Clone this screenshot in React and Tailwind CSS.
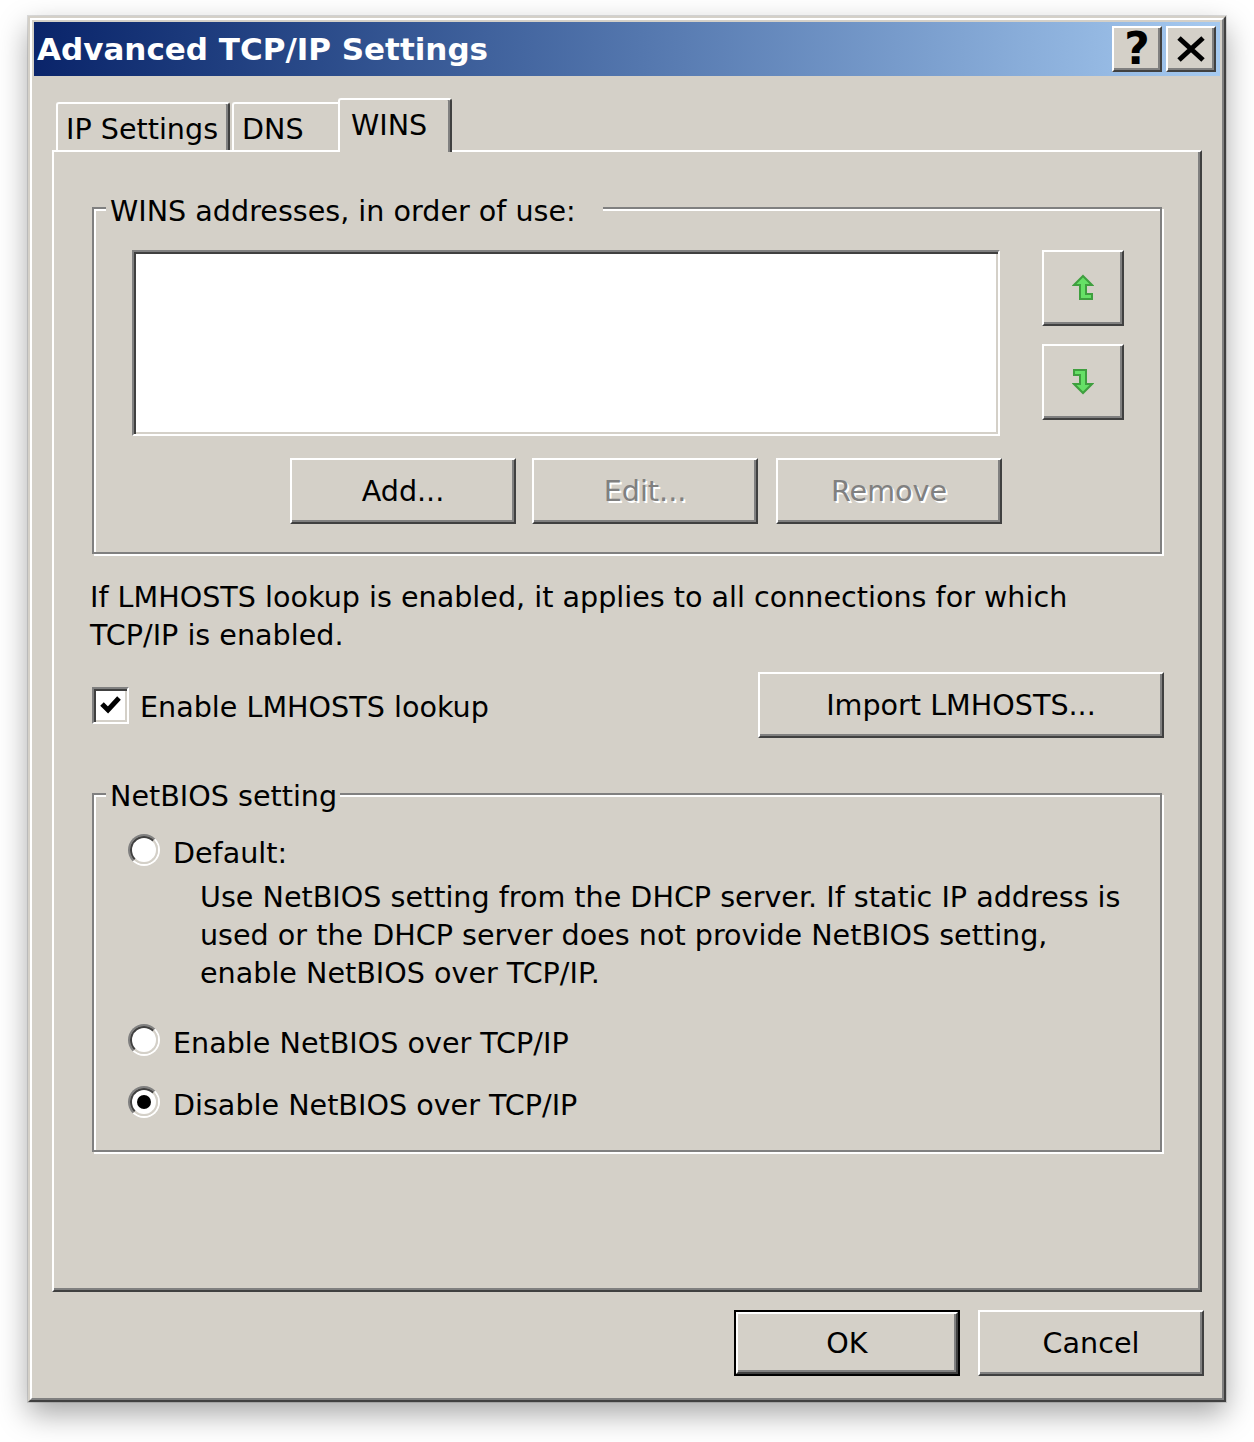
import React from 'react';

const font = "font-['DejaVu_Sans',Verdana,sans-serif]";
const raised = 'border-2 border-t-white border-l-white border-r-[#404040] border-b-[#404040] shadow-[inset_-2px_-2px_0_#808080] bg-[#d4d0c8]';
const etched = 'relative border-2 border-[#808080] shadow-[inset_2px_2px_0_#fff,2px_2px_0_#fff]';

function Button({ children, disabled, className = '' }) {
  return (
    <div className={`${raised} flex items-center justify-center ${className}`}>
      <span className={disabled ? 'text-[#808080] [text-shadow:2px_2px_0_#fff]' : 'text-black'}>{children}</span>
    </div>
  );
}

function Radio({ checked }) {
  return (
    <span className="w-[32px] h-[32px] mb-[6px] rounded-full flex shrink-0 border-2 border-t-[#808080] border-l-[#808080] border-r-white border-b-white">
      <span className="flex-1 rounded-full flex items-center justify-center bg-white border-2 border-t-[#404040] border-l-[#404040] border-r-[#d4d0c8] border-b-[#d4d0c8]">
        {checked && <span className="w-[14px] h-[14px] rounded-full bg-black" />}
      </span>
    </span>
  );
}

function UpArrow() {
  return (
    <svg width="22" height="28" viewBox="-2 -2 22 28">
      <polygon points="9,0 18,9 12,9 12,18 18,18 18,23 6,23 6,9 0,9" fill="#66e066" stroke="#3f9f3f" strokeWidth="2" strokeLinejoin="miter" />
    </svg>
  );
}

function DownArrow() {
  return (
    <svg width="22" height="28" viewBox="-2 -2 22 28">
      <polygon points="0,0 12,0 12,14 18,14 9,23 0,14 6,14 6,5 0,5" fill="#66e066" stroke="#3f9f3f" strokeWidth="2" strokeLinejoin="miter" />
    </svg>
  );
}

export default function App() {
  return (
    <div className={`w-[1254px] h-[1442px] bg-white pt-[16px] pl-[28px] ${font} text-[28.6px] leading-[38px] text-black`}>
      <div className="w-[1198px] h-[1386px] bg-[#d4d0c8] border-2 border-t-[#d4d0c8] border-l-[#d4d0c8] border-r-[#404040] border-b-[#404040] shadow-[0_0_0_1px_rgba(0,0,0,0.12),0_12px_28px_rgba(0,0,0,0.35)]">
        <div className="h-full flex flex-col p-[2px] border-2 border-t-white border-l-white border-r-[#808080] border-b-[#808080]">
          {/* title bar */}
          <div className="h-[54px] shrink-0 flex items-center justify-between bg-linear-to-r from-[#0a246a] to-[#a6caf0]">
            <span className="pl-[3px] text-white font-bold text-[31px] leading-none">Advanced TCP/IP Settings</span>
            <div className="flex gap-[4px] mr-[4px]">
              <div className={`${raised} w-[50px] h-[46px] flex items-center justify-center`}>
                <span className="font-bold text-[44px] leading-none text-black">?</span>
              </div>
              <div className={`${raised} w-[50px] h-[46px] flex items-center justify-center`}>
                <svg width="28" height="26" viewBox="0 0 28 26">
                  <path d="M2 2 L26 24 M26 2 L2 24" stroke="#000" strokeWidth="5" />
                </svg>
              </div>
            </div>
          </div>

          <div className="px-[18px] pt-[22px]">
            {/* tabs */}
            <div className="relative z-10 flex items-end h-[54px] pl-[4px] -mb-[2px]">
              <div className="w-[174px] h-[48px] mb-[2px] pl-[8px] pt-[6px] border-2 border-b-0 border-t-white border-l-white border-r-[#404040] rounded-tl-[3px] rounded-tr-[3px] shadow-[inset_-2px_0_0_#808080]">
                IP Settings
              </div>
              <div className="ml-[2px] w-[106px] h-[48px] mb-[2px] pl-[8px] pt-[6px] border-t-2 border-l-2 border-t-white border-l-white rounded-tl-[3px]">
                DNS
              </div>
              <div className="w-[114px] h-[54px] pl-[11px] pt-[6px] bg-[#d4d0c8] border-2 border-b-0 border-t-white border-l-white border-r-[#404040] rounded-tl-[3px] rounded-tr-[3px] shadow-[inset_-2px_0_0_#808080]">
                WINS
              </div>
            </div>

            {/* panel */}
            <div className="h-[1142px] pl-[38px] pt-[55px] border-2 border-t-white border-l-white border-r-[#404040] border-b-[#404040] shadow-[inset_-2px_-2px_0_#808080]">
              <div className="w-[1072px] flex flex-col">
                <div className={`${etched} w-[1070px] h-[347px] pl-[38px] pt-[41px]`}>
                  <span className="absolute left-[12px] -top-[17px] pl-[4px] pr-[27px] bg-[#d4d0c8]">WINS addresses, in order of use:</span>
                  <div className="flex">
                    <div className="w-[868px] h-[186px] bg-white border-2 border-t-[#808080] border-l-[#808080] border-r-white border-b-white shadow-[inset_2px_2px_0_#404040,inset_-2px_-2px_0_#d4d0c8]" />
                    <div className="ml-[42px] flex flex-col gap-[18px]">
                      <div className={`${raised} w-[82px] h-[76px] flex items-center justify-center`}>
                        <UpArrow />
                      </div>
                      <div className={`${raised} w-[82px] h-[76px] flex items-center justify-center`}>
                        <DownArrow />
                      </div>
                    </div>
                  </div>
                  <div className="flex mt-[22px] pl-[158px]">
                    <Button className="w-[226px] h-[66px]">Add...</Button>
                    <Button disabled className="ml-[16px] w-[226px] h-[66px]">Edit...</Button>
                    <Button disabled className="ml-[18px] w-[226px] h-[66px]">Remove</Button>
                  </div>
                </div>

                <p className="mt-[24px] -ml-[2px] whitespace-nowrap">
                  If LMHOSTS lookup is enabled, it applies to all connections for which
                  <br />
                  TCP/IP is enabled.
                </p>

                <div className="mt-[18px] h-[66px] flex items-center justify-between">
                  <div className="flex items-center gap-[11px]">
                    <div className="w-[37px] h-[37px] flex items-center justify-center bg-white border-2 border-t-[#808080] border-l-[#808080] border-r-white border-b-white shadow-[inset_2px_2px_0_#404040,inset_-2px_-2px_0_#d4d0c8]">
                      <svg width="22" height="20" viewBox="0 0 22 20">
                        <path d="M2 9 L8 15 L19 3" fill="none" stroke="#000" strokeWidth="5" />
                      </svg>
                    </div>
                    <span className="pt-[4px]">Enable LMHOSTS lookup</span>
                  </div>
                  <Button className="w-[406px] h-[66px]">Import LMHOSTS...</Button>
                </div>

                <div className={`${etched} mt-[55px] w-[1070px] h-[359px] pl-[34px] pt-[39px]`}>
                  <span className="absolute left-[12px] -top-[18px] pl-[4px] pr-[3px] bg-[#d4d0c8]">NetBIOS setting</span>
                  <div className="h-[38px] flex items-center gap-[13px]">
                    <Radio />
                    <span>Default:</span>
                  </div>
                  <p className="mt-[6px] pl-[72px] whitespace-nowrap">
                    Use NetBIOS setting from the DHCP server. If static IP address is
                    <br />
                    used or the DHCP server does not provide NetBIOS setting,
                    <br />
                    enable NetBIOS over TCP/IP.
                  </p>
                  <div className="mt-[32px] h-[38px] flex items-center gap-[13px]">
                    <Radio />
                    <span>Enable NetBIOS over TCP/IP</span>
                  </div>
                  <div className="mt-[24px] h-[38px] flex items-center gap-[13px]">
                    <Radio checked />
                    <span>Disable NetBIOS over TCP/IP</span>
                  </div>
                </div>
              </div>
            </div>

            {/* dialog buttons */}
            <div className="flex justify-end gap-[18px] mt-[18px] -mr-[2px]">
              <div className="w-[226px] h-[66px] border-2 border-black flex">
                <Button className="flex-1">OK</Button>
              </div>
              <Button className="w-[226px] h-[66px]">Cancel</Button>
            </div>
          </div>
        </div>
      </div>
    </div>
  );
}
